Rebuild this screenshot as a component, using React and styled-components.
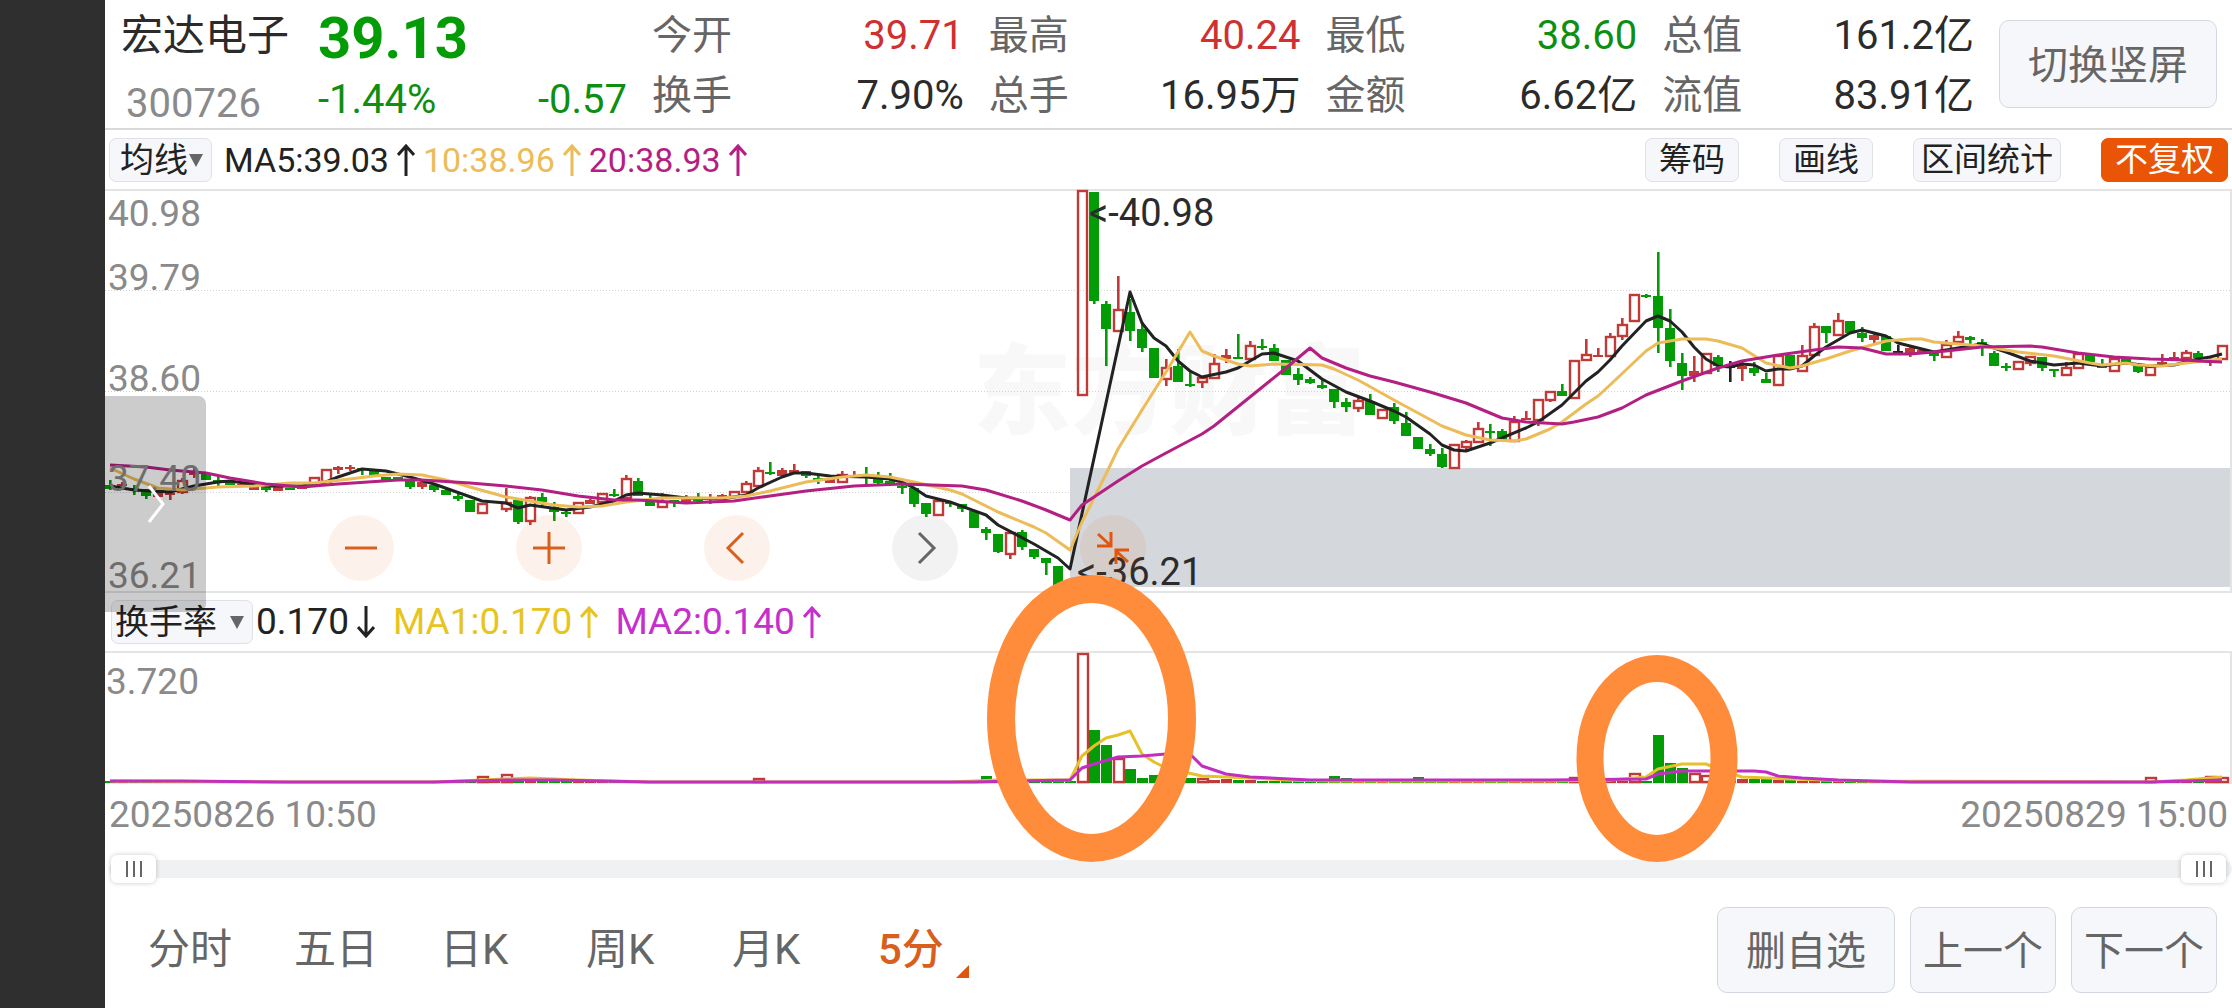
import React, {useState} from 'react';
import styled, {createGlobalStyle} from 'styled-components';

const GlobalStyle = createGlobalStyle`
    * {
      box-sizing: border-box;
    }

    body {
      margin: 0;
      background: #fff;
      color: #2b2b2b;
      font-family: Roboto, "Noto Sans CJK SC", sans-serif;
    }

    button, select, input {
      font-family: inherit;
      margin: 0;
    }
`;

const RED = '#c03a38';
const GREEN = '#049c06';
const BLACK = '#222';

const WIDTH = 2125;
const PRICE_TOP = 2;
const PRICE_HEIGHT = 400;
const VOLUME_HEIGHT = 131;
const STEP = 12;

const xOf = index => 5 + index * STEP;
const percent = x => `${x / WIDTH * 100}%`;

// type, body top, body bottom, high, low
const candles = `
g 296 300 291 301,r 295 297 293 297,g 299 301 296 306,g 301 307 300 310,r 303 308 303 308,r 304 306 300 311,
h 291 302 289 305,r 283 286 279 289,g 284 291 284 291,g 291 293 288 297,g 292 296 292 296,r 295 297 295 297,
r 297 301 297 301,g 298 301 298 303,r 298 302 298 302,g 299 301 299 301,r 297 300 297 300,h 288 295 288 295,
h 280 292 280 292,r 278 281 277 285,r 278 280 276 282,g 279 281 279 286,g 281 286 281 288,g 288 291 288 291,
g 288 291 288 291,g 292 298 291 300,r 293 298 293 300,g 296 301 296 303,g 301 306 299 306,g 307 310 304 312,
g 311 323 311 323,h 314 323 314 323,r 312 314 312 314,h 313 319 299 323,g 311 333 309 335,h 308 331 307 336,
g 308 313 304 319,g 318 323 313 332,g 323 325 320 328,h 313 323 313 325,r 311 315 310 315,h 304 312 304 312,
g 305 307 300 308,h 289 308 286 308,g 292 307 289 307,g 313 317 305 317,h 312 317 304 317,g 311 314 311 318,
r 310 315 306 315,g 309 312 304 312,r 308 310 305 315,r 306 309 305 309,h 302 307 302 307,h 294 302 292 302,
h 281 296 278 296,g 283 285 273 286,r 281 287 279 287,r 281 284 275 284,g 282 287 282 289,g 289 291 287 295,
r 290 294 290 294,h 285 292 282 292,r 286 288 282 288,g 287 289 278 296,g 288 294 283 295,g 292 295 284 295,
g 297 299 296 305,g 299 315 299 318,g 314 325 314 328,h 311 325 311 325,g 313 315 313 318,g 315 320 315 323,
g 322 339 322 339,g 340 344 338 351,g 345 363 345 364,h 343 364 343 370,g 343 358 341 361,g 360 368 360 370,
g 369 374 369 386,g 377 396 377 396,g 396 398 396 398,h 1 205 1 205,g 3 112 3 115,g 115 140 112 177,
h 120 141 87 143,g 123 142 110 152,g 140 159 133 163,g 159 189 159 189,h 178 189 170 197,g 177 193 160 193,
g 195 197 181 198,h 188 192 188 199,h 174 188 165 188,r 166 170 160 174,g 168 170 145 170,h 156 169 152 169,
g 157 159 150 161,g 159 172 155 172,g 171 186 171 186,g 185 191 179 196,g 190 194 188 195,g 196 199 190 200,
g 200 213 200 219,g 213 218 209 223,h 211 218 209 223,g 212 226 205 226,h 220 228 220 228,g 218 232 214 235,
g 234 247 223 247,g 248 260 248 260,g 260 265 255 267,g 265 278 259 279,h 255 278 255 278,h 252 257 251 263,
h 239 252 233 252,g 242 244 235 257,g 242 251 240 251,h 232 251 227 251,r 229 231 222 231,h 210 230 210 237,
h 202 210 202 213,g 202 207 195 207,h 171 208 171 210,h 165 170 150 170,r 166 168 159 168,h 147 166 144 166,
h 135 146 129 151,h 105 131 105 131,g 106 108 105 109,g 107 139 63 164,g 139 172 120 178,g 174 187 164 201,
r 182 187 167 193,h 164 183 164 183,g 168 177 166 183,k 177 179 172 193,r 177 180 172 192,g 179 184 173 187,
g 190 194 184 194,h 166 195 166 195,g 166 178 166 178,h 166 181 156 181,h 137 165 134 165,g 137 144 137 154,
h 131 145 124 145,g 132 144 132 144,g 144 149 138 153,r 146 151 143 156,g 147 162 147 162,k 162 165 156 165,
r 159 165 158 168,r 161 164 161 164,g 164 167 163 172,h 155 167 151 167,h 147 152 142 152,g 148 151 147 155,
g 153 157 150 167,g 164 177 162 177,g 177 179 174 182,h 172 179 172 180,h 167 173 167 177,g 168 179 168 182,
g 180 182 180 188,h 178 185 173 185,h 164 178 164 178,g 166 173 166 173,g 176 179 170 179,h 169 181 169 182,
g 168 174 168 174,g 177 183 177 184,h 177 185 177 185,r 173 177 165 177,r 168 172 163 172,h 163 168 161 168,
g 164 169 162 169,r 172 174 169 177,h 156 169 156 169
`.split(',').map(item => {
    const [type, top, bottom, high, low] = item.trim().split(' ');
    return {type, top: +top, bottom: +bottom, high: +high, low: +low};
});

// candle index, level
const ma5 = [
    [0, 297], [2, 301], [5, 303], [7, 297], [9, 293], [10, 292], [13, 297], [16, 297], [18, 293], [19, 288], [21, 280],
    [23, 282], [25, 288], [27, 295], [31, 312], [33, 314], [34, 319], [35, 316], [38, 321], [40, 318], [42, 312],
    [43, 306], [44, 304], [46, 306], [48, 309], [51, 310], [53, 306], [54, 299], [56, 288], [57, 284], [58, 284],
    [60, 287], [63, 288], [65, 290], [66, 293], [67, 299], [68, 307], [70, 313], [73, 326], [74, 336], [77, 355],
    [78, 362], [79, 369], [80, 380], [85, 103], [86, 134], [87, 149], [88, 157], [89, 172], [90, 182], [91, 188],
    [93, 183], [94, 179], [96, 165], [97, 164], [99, 172], [101, 190], [103, 203], [105, 212], [107, 222], [108, 228],
    [110, 245], [111, 256], [112, 261], [113, 262], [115, 254], [118, 239], [119, 233], [121, 216], [123, 192],
    [124, 183], [125, 171], [126, 157], [128, 132], [129, 127], [130, 132], [131, 143], [132, 158], [133, 170],
    [134, 177], [135, 178], [136, 175], [137, 176], [138, 182], [139, 180], [140, 180], [141, 177], [142, 167],
    [143, 158], [145, 144], [146, 141], [148, 147], [149, 154], [152, 163], [154, 159], [156, 155], [158, 163],
    [160, 172], [162, 176], [164, 174], [166, 177], [168, 174], [170, 177], [172, 176], [174, 170], [175, 168], [176, 165]
];

const ma10 = [
    [0, 279], [2, 290], [4, 299], [6, 301], [9, 298], [12, 297], [15, 294], [17, 294], [20, 290], [22, 287], [24, 285],
    [26, 286], [28, 291], [30, 298], [33, 308], [35, 312], [37, 316], [39, 318], [41, 317], [43, 313], [46, 309],
    [51, 309], [53, 307], [55, 302], [58, 293], [61, 288], [63, 286], [65, 288], [67, 293], [70, 301], [71, 305],
    [74, 323], [77, 338], [78, 344], [80, 361], [81, 333], [83, 285], [84, 260], [86, 221], [88, 183], [90, 143],
    [91, 162], [92, 167], [94, 175], [95, 177], [97, 175], [101, 176], [102, 180], [104, 191], [107, 211], [111, 237],
    [113, 246], [115, 251], [117, 252], [118, 250], [120, 240], [121, 233], [123, 215], [124, 207], [125, 196],
    [128, 162], [129, 154], [131, 150], [133, 150], [134, 152], [136, 159], [138, 174], [140, 179], [141, 177],
    [143, 170], [145, 162], [148, 152], [150, 150], [151, 150], [152, 153], [156, 157], [159, 163], [162, 167],
    [165, 174], [166, 176], [168, 174], [169, 176], [171, 177], [173, 174], [176, 170]
];

const ma20 = [
    [0, 276], [3, 278], [5, 281], [8, 284], [10, 289], [13, 295], [16, 298], [19, 295], [24, 291], [26, 291], [30, 294],
    [33, 297], [36, 301], [39, 307], [42, 311], [44, 311], [48, 314], [52, 312], [55, 307], [58, 302], [62, 297],
    [66, 295], [71, 297], [73, 301], [76, 312], [78, 321], [80, 331], [81, 316], [84, 292], [86, 277], [88, 264],
    [91, 245], [92, 237], [95, 208], [98, 179], [100, 159], [101, 169], [103, 179], [105, 187], [107, 193], [110, 203],
    [113, 214], [116, 229], [118, 233], [121, 235], [122, 233], [124, 228], [126, 219], [128, 206], [131, 192],
    [134, 179], [136, 172], [139, 166], [142, 161], [144, 158], [146, 159], [148, 165], [150, 165], [153, 162],
    [156, 158], [160, 157], [161, 158], [164, 164], [167, 168], [170, 170], [173, 171], [174, 172], [176, 173]
];

const volumes = {
    31: 7, 33: 9, 34: 5, 54: 5, 73: 7, 81: 130, 82: 53, 83: 38, 84: 25, 85: 14, 86: 5, 87: 8, 88: 7, 89: 6, 90: 5, 91: 5,
    92: 3, 93: 4, 94: 3, 95: 3, 102: 7, 103: 5, 109: 6, 110: 4, 122: 6, 127: 10, 129: 48, 130: 20, 131: 15, 132: 10,
    133: 8, 134: 6, 135: 4, 136: 4, 137: 4, 138: 4, 139: 3, 140: 3, 170: 6, 175: 7, 176: 6
};

const volumeMa1 = [
    [0, 128], [14, 129], [27, 129], [31, 127], [35, 125], [39, 127], [45, 129], [54, 129], [70, 129], [74, 127],
    [80, 127], [81, 103], [82, 93], [83, 85], [84, 82], [85, 78], [86, 101], [87, 109], [88, 115], [91, 123], [95, 125],
    [98, 127], [102, 128], [120, 128], [125, 127], [128, 124], [129, 116], [131, 111], [133, 111], [134, 116],
    [136, 124], [140, 126], [146, 128], [170, 129], [173, 127], [176, 124]
];

const volumeMa2 = [
    [0, 128], [6, 128], [15, 129], [27, 129], [33, 127], [37, 127], [45, 129], [60, 129], [72, 129], [80, 127],
    [81, 115], [82, 111], [84, 104], [86, 103], [88, 101], [90, 101], [91, 113], [93, 121], [95, 124], [100, 127],
    [120, 127], [128, 126], [129, 121], [131, 118], [137, 118], [138, 119], [139, 123], [141, 125], [144, 127],
    [150, 129], [170, 129], [176, 127]
];

const stats = [
    {label: '今开', value: '39.71', color: '#cf3030'},
    {label: '最高', value: '40.24', color: '#cf3030'},
    {label: '最低', value: '38.60', color: '#0e8f12'},
    {label: '总值', value: '161.2亿'},
    {label: '换手', value: '7.90%'},
    {label: '总手', value: '16.95万'},
    {label: '金额', value: '6.62亿'},
    {label: '流值', value: '83.91亿'}
];

const priceScale = [
    {value: '40.98', y: 23},
    {value: '39.79', y: 87},
    {value: '38.60', y: 188},
    {value: '37.40', y: 288},
    {value: '36.21', y: 385}
];

const periods = ['分时', '五日', '日K', '周K', '月K', '5分'];

const Page = styled.div`
    display: flex;
    min-height: 100vh;
`;

const Notch = styled.aside`
    flex: 0 0 105px;
    background: #2f2f2f;
`;

const Screen = styled.main`
    flex: 1;
    min-width: 0;
    display: flex;
    flex-direction: column;
`;

const Header = styled.header`
    display: flex;
    height: 130px;
    padding: 6px 15px 2px 16px;
    border-bottom: 2px solid #d9d9d9;
`;

const Identity = styled.div`
    width: 197px;

    h1 {
      margin: 0;
      font-size: 42px;
      font-weight: normal;
      line-height: 60px;
    }

    span {
      display: block;
      padding-left: 5px;
      color: #8a8a8a;
      font-size: 40px;
      line-height: 76px;
    }
`;

const Quote = styled.div`
    width: 309px;
    color: #049c06;

    strong {
      display: block;
      font-size: 58px;
      line-height: 64px;
    }

    div {
      display: flex;
      justify-content: space-between;
      color: #0e8f12;
      font-size: 40px;
      line-height: 60px;
    }
`;

const Stats = styled.dl`
    flex: 1;
    display: grid;
    grid-template-columns: repeat(4, 1fr);
    column-gap: 25px;
    margin: 0 25px;
    font-size: 40px;
    line-height: 60px;
`;

const Stat = styled.div`
    display: flex;
    justify-content: space-between;

    dt {
      color: #666;
    }

    dd {
      margin: 0;
      color: ${props => props.$color || '#2b2b2b'};
    }
`;

const Button = styled.button`
    height: ${props => props.$height || 86}px;
    padding: 0 ${props => props.$padding || 12}px 4px;
    border: 1px solid #d3d8de;
    border-radius: 10px;
    background: #f6f7fa;
    color: #666;
    font-size: 40px;
    white-space: nowrap;
`;

const SwitchButton = styled(Button)`
    margin-top: 14px;
`;

const Toolbar = styled.div`
    display: flex;
    align-items: center;
    height: 61px;
    padding: 0 4px;
    border-bottom: 2px solid #e4e4e4;
`;

const ToolButton = styled.button`
    height: 44px;
    margin-left: 40px;
    padding: 0 ${props => props.$tight ? 7 : 13}px;
    border: 1px solid ${props => props.$active ? '#e95504' : '#dfe1e5'};
    border-radius: 7px;
    background: ${props => props.$active ? '#e95504' : '#f6f7fa'};
    color: ${props => props.$active ? '#fff' : '#222'};
    font-size: 33px;
    line-height: 40px;
`;

const Tools = styled.div`
    display: flex;
    margin-left: auto;
`;

const SelectBox = styled.div`
    position: relative;
    width: ${props => props.$width}px;
    margin-left: ${props => props.$offset || 0}px;

    select {
      display: block;
      width: 100%;
      height: 44px;
      padding: 0 0 0 ${props => props.$inset}px;
      border: 1px solid #dfe1e5;
      border-radius: 7px;
      background: #f6f7fa;
      color: #222;
      font-size: 34px;
      line-height: 40px;
      appearance: none;
    }

    svg {
      position: absolute;
      top: 16px;
      right: 9px;
      pointer-events: none;
    }
`;

const Legend = styled.span`
    display: flex;
    align-items: center;
    gap: 8px;
    margin-left: ${props => props.$offset}px;
    color: ${props => props.$color};
    font-size: ${props => props.$size}px;
    line-height: 44px;
`;

const Chart = styled.section`
    position: relative;
    height: ${props => props.$height}px;
    border-right: 2px solid #e4e4e4;
    z-index: ${props => props.$front ? 1 : 'auto'};
`;

const Plot = styled.svg`
    position: relative;
    display: block;
    width: 100%;
    height: 100%;
    overflow: visible;
    pointer-events: none;
`;

const Watermark = styled.div`
    position: absolute;
    top: 132px;
    left: ${percent(868)};
    color: #f8f8f8;
    font-size: 98px;
    font-weight: 900;
    line-height: 140px;
    white-space: nowrap;
`;

const ScaleLabel = styled.span`
    position: absolute;
    top: ${props => props.$y - 20}px;
    left: ${props => props.$x}px;
    color: #8a8a8a;
    font-size: 37px;
    line-height: 40px;
`;

const Marker = styled.span`
    position: absolute;
    top: ${props => props.$y - 20}px;
    left: ${props => percent(props.$x)};
    font-size: 38px;
    line-height: 40px;
`;

const Controls = styled.div`
    position: absolute;
    top: 324px;
    left: ${percent(223)};
    display: flex;
    gap: 122px;
`;

const RoundButton = styled.button`
    width: 66px;
    height: 66px;
    padding: 0;
    border: 0;
    border-radius: 50%;
    background: ${props => props.$muted ? 'rgba(0, 0, 0, 0.05)' : 'rgba(233, 85, 4, 0.08)'};
    color: ${props => props.$muted ? '#666' : '#d9601c'};

    svg {
      display: block;
    }
`;

const Drawer = styled.button`
    position: absolute;
    top: 205px;
    left: 0;
    width: 101px;
    height: 216px;
    padding: 0;
    border: 0;
    border-radius: 0 8px 8px 0;
    background: rgba(0, 0, 0, 0.2);
    z-index: 1;

    svg {
      display: block;
      margin-left: 42px;
    }
`;

const IndicatorBar = styled(Toolbar)`
    height: 62px;
    border-top: 2px solid #e4e4e4;
`;

const Dates = styled.div`
    display: flex;
    justify-content: space-between;
    height: 62px;
    padding: 0 4px;
    color: #8a8a8a;
    font-size: 37px;
    line-height: 62px;
`;

const Range = styled.div`
    position: relative;
    height: 18px;
    margin: 14px 0 14px 4px;
    border-radius: 9px;
    background: #f0f1f3;

    input {
      position: absolute;
      top: -5px;
      left: 2px;
      width: calc(100% - 8px);
      height: 28px;
      background: none;
      appearance: none;
      pointer-events: none;
    }

    input::-webkit-slider-thumb {
      width: 45px;
      height: 28px;
      border-radius: 6px;
      background:
        linear-gradient(#666, #666) 15px 6px / 2px 16px no-repeat,
        linear-gradient(#666, #666) 22px 6px / 2px 16px no-repeat,
        linear-gradient(#666, #666) 29px 6px / 2px 16px no-repeat,
        #fff;
      box-shadow: 0 0 5px rgba(0, 0, 0, 0.22);
      appearance: none;
      pointer-events: auto;
    }
`;

const Footer = styled.footer`
    display: flex;
    align-items: center;
    justify-content: space-between;
    height: 116px;
    padding: 0 15px 0 43px;
`;

const Tabs = styled.nav`
    display: flex;
`;

const Tab = styled.button`
    position: relative;
    width: 146px;
    padding: 0;
    border: 0;
    background: none;
    color: ${props => props.$active ? '#d9601c' : '#666'};
    font-size: 42px;
    font-weight: ${props => props.$active ? 500 : 400};
    line-height: 60px;
    text-align: left;

    svg {
      position: absolute;
      bottom: 2px;
      left: 78px;
    }
`;

const Actions = styled.div`
    display: flex;
    gap: 15px;
`;

const Arrow = ({down}) => (
    <svg width="18" height="32" viewBox="0 0 18 32" fill="none" stroke="currentColor" strokeWidth="3">
        <path d={down ? 'M9 0V30M1 21L9 30L17 21' : 'M9 32V2M1 11L9 2L17 11'}/>
    </svg>
);

const Select = ({label, value, ...props}) => (
    <SelectBox {...props}>
        <select aria-label={label} defaultValue={value}>
            <option>{value}</option>
        </select>
        <svg width="14" height="13" viewBox="0 0 14 13" fill="#666"><path d="M0 0H14L7 13Z"/></svg>
    </SelectBox>
);

const Candle = ({index, type, top, bottom, high, low}) => {
    const x = xOf(index);
    const color = type === 'g' ? GREEN : type === 'k' ? BLACK : RED;

    return (
        <g fill={color}>
            {high < top && <rect x={x - 1} y={high} width="2.6" height={top - high}/>}
            {low > bottom && <rect x={x - 1} y={bottom} width="2.6" height={low - bottom}/>}
            {type === 'h'
                ? <rect x={x - 4} y={top + 1} width="9" height={bottom - top} fill="none" stroke={color} strokeWidth="2.4"/>
                : <rect x={x - 5} y={top} width="10" height={bottom - top}/>}
        </g>
    );
};

const VolumeBar = ({index, type}) => {
    const height = volumes[index] || 2;
    const hollow = type !== 'g' && height > 4;
    const color = type === 'g' ? GREEN : RED;

    return hollow
        ? <rect x={xOf(index) - 4} y={VOLUME_HEIGHT - height} width="10" height={height - 2}
                fill="none" stroke={color} strokeWidth="2.4"/>
        : <rect x={xOf(index) - 5} y={VOLUME_HEIGHT - 1 - height} width="11" height={height} fill={color}/>;
};

const Line = ({points, color}) => (
    <polyline points={points.map(([index, y]) => `${xOf(index)},${y}`).join(' ')}
              fill="none" stroke={color} strokeWidth="3" strokeLinejoin="round"/>
);

const PriceChart = () => (
    <Chart $height={PRICE_HEIGHT}>
        <Watermark>东方财富</Watermark>
        <Plot viewBox={`0 ${PRICE_TOP} ${WIDTH} ${PRICE_HEIGHT}`} preserveAspectRatio="none">
            {[101, 202, 303].map(y => (
                <path key={y} d={`M0 ${y + 0.5}H${WIDTH}`} stroke="#d2d2d2" strokeDasharray="1 2"/>
            ))}
            <rect x="965" y="279" width={WIDTH - 965} height="119" fill="#d4d7dc"/>
            {candles.map((candle, index) => <Candle key={index} index={index} {...candle}/>)}
            <Line points={ma5} color={BLACK}/>
            <Line points={ma10} color="#ecbc58"/>
            <Line points={ma20} color="#b31f82"/>
        </Plot>
        {priceScale.map(({value, y}) => <ScaleLabel key={value} $x={3} $y={y}>{value}</ScaleLabel>)}
        <Marker $x={984} $y={22}>&lt;-40.98</Marker>
        <Marker $x={972} $y={381}>&lt;-36.21</Marker>
        <Controls>
            <RoundButton aria-label="缩小">
                <svg width="66" height="66" fill="none" stroke="currentColor" strokeWidth="3"><path d="M17 33H49"/></svg>
            </RoundButton>
            <RoundButton aria-label="放大">
                <svg width="66" height="66" fill="none" stroke="currentColor" strokeWidth="3"><path d="M17 33H49M33 17V49"/></svg>
            </RoundButton>
            <RoundButton aria-label="左移">
                <svg width="66" height="66" fill="none" stroke="currentColor" strokeWidth="3"><path d="M39 18L24 33L39 48"/></svg>
            </RoundButton>
            <RoundButton aria-label="右移" $muted>
                <svg width="66" height="66" fill="none" stroke="currentColor" strokeWidth="3"><path d="M27 18L42 33L27 48"/></svg>
            </RoundButton>
            <RoundButton aria-label="退出全屏">
                <svg width="66" height="66" fill="none" stroke="#e0560f" strokeWidth="3">
                    <path d="M18 19L30 30M31 17V31H17M48 47L36 36M49 35H36V49"/>
                </svg>
            </RoundButton>
        </Controls>
        <Drawer aria-label="展开">
            <svg width="20" height="40" fill="none" stroke="#fff" strokeWidth="3"><path d="M2 2L16 20L2 38"/></svg>
        </Drawer>
    </Chart>
);

const VolumeChart = () => (
    <Chart $height={VOLUME_HEIGHT} $front>
        <Plot viewBox={`0 0 ${WIDTH} ${VOLUME_HEIGHT}`} preserveAspectRatio="none">
            <path d={`M0 130.5H${WIDTH}`} stroke="#e4e4e4"/>
            {candles.map((candle, index) => <VolumeBar key={index} index={index} type={candle.type}/>)}
            <Line points={volumeMa1} color="#e4c22c"/>
            <Line points={volumeMa2} color="#c02fc0"/>
            <g fill="none" stroke="#ff8c3a">
                <ellipse cx="986.5" cy="65.5" rx="90.5" ry="129.5" strokeWidth="28"/>
                <ellipse cx="1552" cy="105.5" rx="67" ry="90" strokeWidth="27"/>
            </g>
        </Plot>
        <ScaleLabel $x={1} $y={29}>3.720</ScaleLabel>
    </Chart>
);

const App = () => {
    const [period, setPeriod] = useState('5分');

    return (
        <Page>
            <GlobalStyle/>
            <Notch/>
            <Screen>
                <Header>
                    <Identity>
                        <h1>宏达电子</h1>
                        <span>300726</span>
                    </Identity>
                    <Quote>
                        <strong>39.13</strong>
                        <div><span>-1.44%</span><span>-0.57</span></div>
                    </Quote>
                    <Stats>
                        {stats.map(({label, value, color}) => (
                            <Stat key={label} $color={color}>
                                <dt>{label}</dt>
                                <dd>{value}</dd>
                            </Stat>
                        ))}
                    </Stats>
                    <SwitchButton $height={88} $padding={28}>切换竖屏</SwitchButton>
                </Header>
                <Toolbar>
                    <Select label="主图指标" value="均线" $width={103} $inset={10}/>
                    <Legend $size={34} $offset={12} $color="#222">MA5:39.03<Arrow/></Legend>
                    <Legend $size={34} $offset={8} $color="#ecbc58">10:38.96<Arrow/></Legend>
                    <Legend $size={34} $offset={8} $color="#b31f82">20:38.93<Arrow/></Legend>
                    <Tools>
                        <ToolButton>筹码</ToolButton>
                        <ToolButton>画线</ToolButton>
                        <ToolButton $tight>区间统计</ToolButton>
                        <ToolButton $active>不复权</ToolButton>
                    </Tools>
                </Toolbar>
                <PriceChart/>
                <IndicatorBar>
                    <Select label="副图指标" value="换手率" $width={142} $inset={3} $offset={2}/>
                    <Legend $size={37} $offset={3} $color="#222">0.170<Arrow down/></Legend>
                    <Legend $size={37} $offset={18} $color="#e8c420">MA1:0.170<Arrow/></Legend>
                    <Legend $size={37} $offset={17} $color="#c52fcb">MA2:0.140<Arrow/></Legend>
                </IndicatorBar>
                <VolumeChart/>
                <Dates>
                    <time>20250826 10:50</time>
                    <time>20250829 15:00</time>
                </Dates>
                <Range>
                    <input type="range" aria-label="开始时间" defaultValue="0"/>
                    <input type="range" aria-label="结束时间" defaultValue="100"/>
                </Range>
                <Footer>
                    <Tabs>
                        {periods.map(name => (
                            <Tab key={name} $active={name === period} onClick={() => setPeriod(name)}>
                                {name}
                                {name === '5分' && <svg width="13" height="13" fill="#e0560f"><path d="M13 0V13H0Z"/></svg>}
                            </Tab>
                        ))}
                    </Tabs>
                    <Actions>
                        <Button $padding={28}>删自选</Button>
                        <Button>上一个</Button>
                        <Button>下一个</Button>
                    </Actions>
                </Footer>
            </Screen>
        </Page>
    );
};

export default App;
